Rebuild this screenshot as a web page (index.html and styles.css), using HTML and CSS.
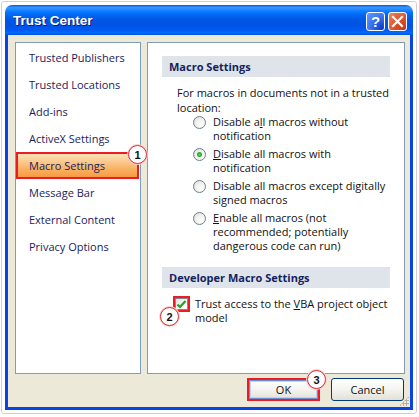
FILE: index.html
```html
<!DOCTYPE html>
<html>
<head>
<meta charset="utf-8">
<link rel="stylesheet" href="styles.css">
</head>
<body>
<div class="frame">
  <div class="window">
    <div class="titlebar">
      <span class="title">Trust Center</span>
      <div class="tb-buttons">
        <span class="tb-btn help">?</span>
        <span class="tb-btn close">
          <svg width="13" height="13" viewBox="0 0 13 13"><path d="M2 2 L11 11 M11 2 L2 11" stroke="#fff" stroke-width="2.2" stroke-linecap="square"/></svg>
        </span>
      </div>
    </div>
    <div class="body">
      <div class="panels">
        <div class="nav">
          <div class="nav-item">Trusted Publishers</div>
          <div class="nav-item">Trusted Locations</div>
          <div class="nav-item">Add-ins</div>
          <div class="nav-item">ActiveX Settings</div>
          <div class="nav-item selected">Macro Settings<span class="callout c1">1</span></div>
          <div class="nav-item">Message Bar</div>
          <div class="nav-item">External Content</div>
          <div class="nav-item">Privacy Options</div>
        </div>
        <div class="content">
          <div class="band">Macro Settings</div>
          <p class="intro">For macros in documents not in a trusted location:</p>
          <div class="options">
            <div class="opt"><span class="radio"></span><span class="opt-text">Disable a<u>l</u>l macros without notification</span></div>
            <div class="opt"><span class="radio on"></span><span class="opt-text"><u>D</u>isable all macros with notification</span></div>
            <div class="opt"><span class="radio"></span><span class="opt-text">Disable all macros except di<u>g</u>itally signed macros</span></div>
            <div class="opt"><span class="radio"></span><span class="opt-text"><u>E</u>nable all macros (not recommended; potentially dangerous code can run)</span></div>
          </div>
          <div class="band band2">Developer Macro Settings</div>
          <div class="check-row">
            <span class="check-wrap">
              <span class="check">
                <svg width="11" height="11" viewBox="0 0 11 11"><path d="M1.5 5.5 L4 8 L9.5 2" fill="none" stroke="#21a121" stroke-width="2.2"/></svg>
              </span>
              <span class="callout c2">2</span>
            </span>
            <span class="check-text">Trust access to the <u>V</u>BA project object model</span>
          </div>
        </div>
      </div>
      <div class="actions">
        <button class="btn ok">OK<span class="callout c3">3</span></button>
        <button class="btn">Cancel</button>
        <span class="grip"></span>
      </div>
    </div>
  </div>
</div>
</body>
</html>
```
FILE: styles.css
```css
* { box-sizing: border-box; }
html, body { margin: 0; padding: 0; background: #fff; }
body { width: 419px; height: 417px; overflow: hidden; font-family: "Open Sans", "Noto Sans", sans-serif; }

.frame {
  margin: 1px;
  width: 416px;
  height: 413px;
  border: 1px solid #d0d0d0;
  border-radius: 3px;
  padding: 3px;
}
.window {
  width: 408px;
  height: 405px;
  display: flex;
  flex-direction: column;
}
.titlebar {
  height: 30px;
  border-radius: 7px 7px 0 0;
  background: linear-gradient(to bottom, #0058ee 0%, #3a93ff 8%, #288eff 14%, #127dff 20%, #036ffc 28%, #0262ee 38%, #0057e5 50%, #0054e3 62%, #0055eb 76%, #005bf5 86%, #026afe 92%, #0062ef 96%, #0052d6 100%);
  display: flex;
  align-items: center;
  justify-content: space-between;
  padding: 0 6px 0 8px;
}
.title {
  font-family: "Liberation Sans", Arial, sans-serif;
  font-weight: bold;
  font-size: 13.5px;
  color: #fff;
  text-shadow: 1px 1px 0 #0a1883;
  margin-top: 1px;
}
.tb-buttons { display: flex; gap: 3px; margin-top: 2px; }
.tb-btn {
  width: 19px;
  height: 19px;
  border: 1px solid #fff;
  border-radius: 3px;
  display: flex;
  align-items: center;
  justify-content: center;
  color: #fff;
}
.help {
  background: radial-gradient(circle at 90% 90%, #0a3fc6 0%, #3c74f0 55%, #6a9cff 100%);
  font-family: "Liberation Sans", Arial, sans-serif;
  font-weight: bold;
  font-size: 15px;
  line-height: 1;
}
.close {
  background: radial-gradient(circle at 90% 90%, #c3391a 0%, #e0582f 55%, #f08a6a 100%);
}

.body {
  flex: 1;
  background: #ece9d8;
  border: 3px solid #0843e4;
  border-top: none;
  padding: 7px 5px 0 7px;
  display: flex;
  flex-direction: column;
  position: relative;
}
.panels {
  display: flex;
  gap: 6px;
  height: 332px;
}
.nav {
  width: 126px;
  border: 1px solid #7f9db9;
  background: #fff;
  padding-top: 1px;
}
.nav-item {
  height: 27px;
  display: flex;
  align-items: center;
  padding-left: 13px;
  font-size: 11px;
  color: #1b1b5e;
  white-space: nowrap;
}
.nav-item.selected {
  position: relative;
  margin-right: 1px;
  border: 2px solid #ec1c24;
  padding-left: 11px;
  background: linear-gradient(to bottom, #fde1b8 0%, #fbc88a 35%, #f9ad5e 70%, #f79a44 100%);
}
.callout {
  position: absolute;
  width: 19px;
  height: 19px;
  border-radius: 50%;
  border: 1.5px solid #e8262b;
  background: #fff;
  color: #111;
  font-family: "Liberation Sans", Arial, sans-serif;
  font-weight: bold;
  font-size: 11px;
  display: flex;
  align-items: center;
  justify-content: center;
  box-shadow: 0 0 0 1px #fbd0d0;
}
.c1 { left: 110px; top: -9px; }

.content {
  width: 258px;
  border: 1px solid #7f9db9;
  background: #fff;
  padding: 13px 14px 0 14px;
  font-size: 11px;
  color: #111;
}
.band {
  height: 21px;
  background: #dfe4ea;
  color: #15225e;
  font-weight: bold;
  padding-left: 7px;
  display: flex;
  align-items: center;
}
.intro {
  margin: 8px -8px 0 15px;
  line-height: 15px;
}
.options {
  margin-left: 31px;
  display: flex;
  flex-direction: column;
  gap: 4px;
}
.opt {
  display: flex;
  align-items: flex-start;
  line-height: 14px;
}
.radio {
  flex: none;
  width: 13px;
  height: 13px;
  border-radius: 50%;
  border: 1px solid #6d7f93;
  background: radial-gradient(circle at 65% 65%, #ffffff 0%, #f0f0ec 50%, #d6d6cf 100%);
  margin-top: 1px;
  margin-right: 7px;
  display: flex;
  align-items: center;
  justify-content: center;
}
.radio.on::after {
  content: "";
  width: 5px;
  height: 5px;
  border-radius: 50%;
  background: radial-gradient(circle, #5cd35c 0%, #21a121 70%);
}
.opt-text { width: 178px; }
.band2 { margin-top: 14px; }
.check-row {
  display: flex;
  align-items: flex-start;
  margin: 8px 0 0 11px;
  line-height: 14px;
}
.check-wrap {
  position: relative;
  flex: none;
  width: 17px;
  height: 16px;
  border: 2px solid #ec1c24;
  display: flex;
  align-items: center;
  justify-content: center;
  margin-right: 5px;
}
.check {
  width: 13px;
  height: 12px;
  border: 1px solid #7a8a99;
  background: linear-gradient(135deg, #e4e4dc 0%, #fff 80%);
  display: flex;
  align-items: center;
  justify-content: center;
}
.c2 { left: -15px; top: 9px; }
.check-text { width: 205px; margin-top: 1px; }

.actions {
  display: flex;
  justify-content: flex-end;
  gap: 11px;
  margin-top: 4px;
  padding-right: 1px;
}
.btn {
  position: relative;
  width: 73px;
  height: 23px;
  border: 1px solid #003c74;
  border-radius: 3px;
  background: linear-gradient(to bottom, #ffffff 0%, #f4f4f0 50%, #e2e0d6 100%);
  font-family: "Open Sans", "Noto Sans", sans-serif;
  font-size: 11px;
  color: #111;
  padding: 0;
}
.btn.ok {
  border: 2px solid #ec1c24;
  border-radius: 0;
  box-shadow: inset 0 0 0 1px #6d8fd6, inset 0 0 0 2px #bcd3f7;
}
.c3 { left: 58px; top: -10px; }
.grip {
  position: absolute;
  right: 1px;
  bottom: 1px;
  width: 10px;
  height: 10px;
  background:
    radial-gradient(circle, #b6b2a2 1px, transparent 1.2px) 0 0 / 3px 3px;
  clip-path: polygon(100% 0, 100% 100%, 0 100%);
}
```
